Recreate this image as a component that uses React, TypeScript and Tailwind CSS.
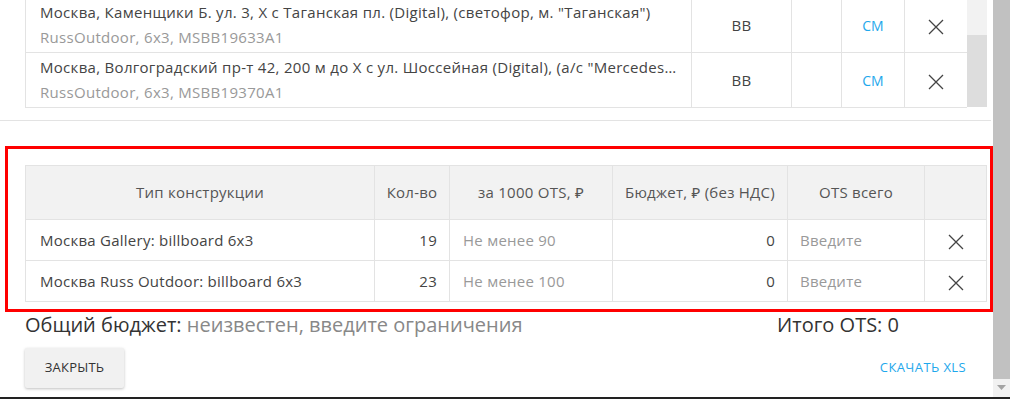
import React from 'react'

const font = { fontFamily: '"Open Sans", "Noto Sans", sans-serif' }

function Cross({ className = '' }: { className?: string }) {
  return (
    <svg width="16" height="16" viewBox="0 0 16 16" className={className}>
      <path d="M1 1L15 15M15 1L1 15" stroke="#444" strokeWidth="1.3" fill="none" />
    </svg>
  )
}

const placements = [
  {
    address: 'Москва, Каменщики Б. ул. 3, Х с Таганская пл. (Digital), (светофор, м. "Таганская")',
    meta: 'RussOutdoor, 6x3, MSBB19633A1',
  },
  {
    address: 'Москва, Волгоградский пр-т 42, 200 м до Х с ул. Шоссейная (Digital), (а/с "Mercedes-Benz")',
    meta: 'RussOutdoor, 6x3, MSBB19370A1',
  },
]

const constructions = [
  { name: 'Москва Gallery: billboard 6x3', count: 19, min: 'Не менее 90', budget: 0 },
  { name: 'Москва Russ Outdoor: billboard 6x3', count: 23, min: 'Не менее 100', budget: 0 },
]

export default function App() {
  return (
    <div className="flex flex-col w-[1010px] h-[399px] overflow-hidden bg-white text-[#444]" style={font}>
      <div className="flex flex-1 min-h-0">
        <div className="w-[993px] flex flex-col">
          {/* список адресов */}
          <div className="flex pl-[25px] mt-[-3px] h-[111px]">
            <table className="w-[941px] table-fixed border-collapse text-[15px] tracking-[0.3px]">
              <colgroup>
                <col className="w-[666px]" />
                <col className="w-[100px]" />
                <col className="w-[50px]" />
                <col className="w-[63px]" />
                <col className="w-[62px]" />
              </colgroup>
              <tbody>
                {placements.map((p) => (
                  <tr key={p.meta} className="h-[55px]">
                    <td className="border border-[#e3e3e3] pl-[14px] pr-[10px] leading-[25px]">
                      <div className="truncate">{p.address}</div>
                      <div className="text-[#999]">{p.meta}</div>
                    </td>
                    <td className="border border-[#e3e3e3] text-center">BB</td>
                    <td className="border border-[#e3e3e3]" />
                    <td className="border border-[#e3e3e3] text-center text-[14px] tracking-normal text-[#1ea8ec]">СМ</td>
                    <td className="border border-[#e3e3e3] border-r-0 text-center">
                      <Cross className="inline-block align-middle" />
                    </td>
                  </tr>
                ))}
              </tbody>
            </table>
            <div className="w-[20px] flex flex-col">
              <div className="h-[38px] bg-[#f2f2f2]" />
              <div className="h-[72px] bg-[#dddddd]" />
            </div>
          </div>
          <div className="mt-[12px] w-[991px] h-px bg-[#e3e3e3]" />

          {/* выделенная таблица */}
          <div className="mt-[25px] ml-[5px] w-[988px] border-[3px] border-[#ff0000] pl-[17px] pr-[3px] pt-[16px] pb-[7px]">
            <table className="w-full table-fixed border-collapse text-[15px] tracking-[0.25px]">
              <colgroup>
                <col className="w-[349px]" />
                <col className="w-[75px]" />
                <col className="w-[163px]" />
                <col className="w-[175px]" />
                <col className="w-[137px]" />
                <col />
              </colgroup>
              <thead>
                <tr className="h-[54px] bg-[#f2f2f2] text-[#555]">
                  <th className="border border-[#e3e3e3] font-normal">Тип конструкции</th>
                  <th className="border border-[#e3e3e3] font-normal">Кол-во</th>
                  <th className="border border-[#e3e3e3] font-normal">за 1000 OTS, ₽</th>
                  <th className="border border-[#e3e3e3] font-normal">Бюджет, ₽ (без НДС)</th>
                  <th className="border border-[#e3e3e3] font-normal">OTS всего</th>
                  <th className="border border-[#e3e3e3] font-normal" />
                </tr>
              </thead>
              <tbody>
                {constructions.map((c) => (
                  <tr key={c.name} className="h-[41px]">
                    <td className="border border-[#e3e3e3] pl-[14px]">{c.name}</td>
                    <td className="border border-[#e3e3e3] text-right pr-[12px]">{c.count}</td>
                    <td className="border border-[#e3e3e3] pl-[13px] text-[#999]">{c.min}</td>
                    <td className="border border-[#e3e3e3] text-right pr-[12px]">{c.budget}</td>
                    <td className="border border-[#e3e3e3] pl-[12px] text-[#999]">Введите</td>
                    <td className="border border-[#e3e3e3] text-center">
                      <Cross className="inline-block align-middle" />
                    </td>
                  </tr>
                ))}
              </tbody>
            </table>
          </div>

          {/* итоги */}
          <div className="flex justify-between pl-[25px] pr-[94px] text-[20px] leading-[26px] text-[#333]">
            <div>
              Общий бюджет: <span className="text-[#888]">неизвестен, введите ограничения</span>
            </div>
            <div>Итого OTS: 0</div>
          </div>

          <div className="flex items-center justify-between pl-[25px] pr-[27px] mt-[10px]">
            <button className="w-[99px] h-[40px] rounded-[2px] bg-[#f1f1f1] shadow-[0_1px_3px_rgba(0,0,0,0.25)] text-[13px] tracking-[0.2px] text-[#333] uppercase">
              Закрыть
            </button>
            <button className="text-[13px] tracking-[0.4px] text-[#1ea8ec] uppercase">Скачать XLS</button>
          </div>
        </div>

        {/* полоса прокрутки */}
        <div className="w-[17px] flex flex-col">
          <div className="flex-1 bg-[#c1c1c1]" />
          <div className="h-[18px] bg-[#f1f1f1] flex items-center justify-center">
            <svg width="9" height="6" viewBox="0 0 9 6">
              <path d="M0 0H9L4.5 5Z" fill="#a3a3a3" />
            </svg>
          </div>
        </div>
      </div>
      <div className="h-[2px] bg-[#222]" />
    </div>
  )
}
